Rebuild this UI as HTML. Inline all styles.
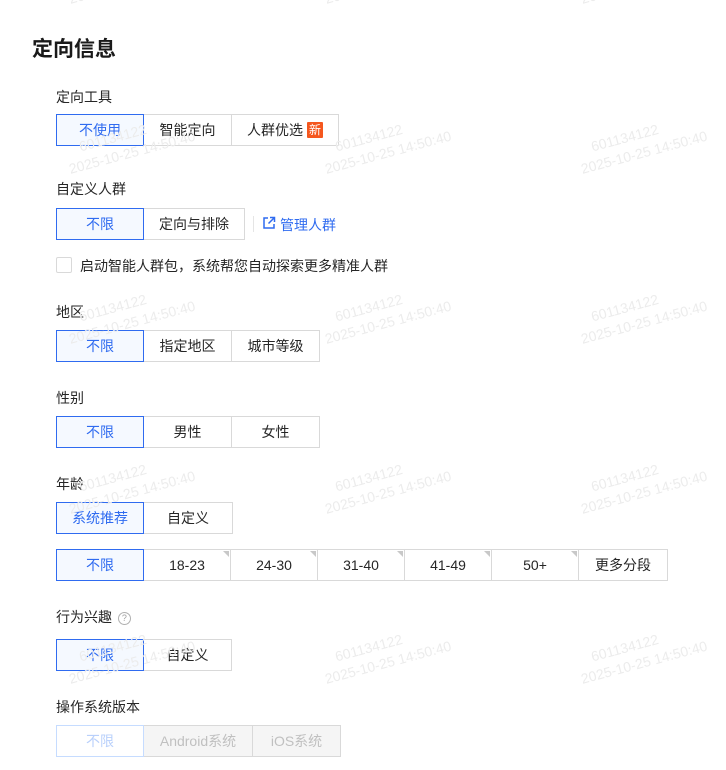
<!DOCTYPE html><html><head><meta charset="utf-8"><style>
*{margin:0;padding:0;box-sizing:border-box}
body{width:726px;height:770px;background:#fff;position:relative;overflow:hidden;font-family:"Liberation Sans","Noto Sans CJK SC",sans-serif;color:#1f1f1f}
.a{position:absolute}
.t{left:32px;top:33px;font-size:21px;font-weight:bold;color:#1a1a1a}
.l{position:absolute;left:56px;font-size:14px;color:#262626}
.g{position:absolute;left:56px;height:32px;display:flex}
.b{height:32px;border:1px solid #d9d9d9;margin-left:-1px;display:flex;align-items:center;justify-content:center;font-size:14px;color:#262626;background:#fff;position:relative}
.b:first-child{margin-left:0}
.s{border-color:#2f6bf0;color:#2f6bf0;background:#f5f9ff;z-index:2}
.c:after{content:"";position:absolute;right:1px;top:1px;border-top:6px solid #c8c8c8;border-left:6px solid transparent}
.d{color:#c0c0c0;background:#f5f5f5}
.ds{border-color:#c6dcff;color:#b9d0fb;background:#fff;z-index:2}
.w{position:absolute;color:#ececec;font-size:14px;transform:rotate(-15deg);transform-origin:left top;line-height:19px;white-space:nowrap;z-index:5;pointer-events:none}
.new{display:inline-block;width:16px;height:16px;background:#f5571e;color:#fff;font-size:12px;line-height:16px;text-align:center;margin-left:4px;border-radius:1px}
</style></head><body>
<div class="a t">定向信息</div>

<div class="l" style="top:87px">定向工具</div>
<div class="g" style="top:114px"><div class="b s" style="width:88px">不使用</div><div class="b" style="width:89px">智能定向</div><div class="b" style="width:108px">人群优选<span class="new">新</span></div></div>

<div class="l" style="top:179px">自定义人群</div>
<div class="g" style="top:208px"><div class="b s" style="width:88px">不限</div><div class="b" style="width:102px">定向与排除</div></div>
<div class="a" style="left:253px;top:216px;width:1px;height:16px;background:#e5e5e5"></div>
<svg class="a" style="left:262px;top:216px" width="14" height="14" viewBox="0 0 14 14" fill="none" stroke="#2f6bf0" stroke-width="1.5"><path d="M6 2H2v10h10V8"/><path d="M8 1.5h4.5V6M12.5 1.5L6.5 7.5"/></svg>
<div class="a" style="left:280px;top:215px;font-size:14px;color:#2f6bf0">管理人群</div>
<div class="a" style="left:56px;top:257px;width:16px;height:16px;border:1px solid #d9d9d9;border-radius:2px"></div>
<div class="a" style="left:80px;top:256px;font-size:14px;color:#262626">启动智能人群包，系统帮您自动探索更多精准人群</div>

<div class="l" style="top:302px">地区</div>
<div class="g" style="top:330px"><div class="b s" style="width:88px">不限</div><div class="b" style="width:89px">指定地区</div><div class="b" style="width:89px">城市等级</div></div>

<div class="l" style="top:388px">性别</div>
<div class="g" style="top:416px"><div class="b s" style="width:88px">不限</div><div class="b" style="width:89px">男性</div><div class="b" style="width:89px">女性</div></div>

<div class="l" style="top:474px">年龄</div>
<div class="g" style="top:502px"><div class="b s" style="width:88px">系统推荐</div><div class="b" style="width:90px">自定义</div></div>
<div class="g" style="top:549px"><div class="b s" style="width:88px">不限</div><div class="b c" style="width:88px">18-23</div><div class="b c" style="width:88px">24-30</div><div class="b c" style="width:88px">31-40</div><div class="b c" style="width:88px">41-49</div><div class="b c" style="width:88px">50+</div><div class="b" style="width:90px">更多分段</div></div>

<div class="l" style="top:607px">行为兴趣 <span style="display:inline-block;width:13px;height:13px;border:1px solid #b0b0b0;border-radius:50%;font-size:9px;line-height:11px;text-align:center;color:#a0a0a0;vertical-align:1px;margin-left:2px">?</span></div>
<div class="g" style="top:639px"><div class="b s" style="width:88px">不限</div><div class="b" style="width:89px">自定义</div></div>

<div class="l" style="top:697px">操作系统版本</div>
<div class="g" style="top:725px"><div class="b ds" style="width:88px">不限</div><div class="b d" style="width:110px">Android系统</div><div class="b d" style="width:89px">iOS系统</div></div>

<div class="w" style="left:62px;top:-28px">&nbsp;&nbsp;&nbsp;&nbsp;601134122<br>2025-10-25 14:50:40</div>
<div class="w" style="left:318px;top:-28px">&nbsp;&nbsp;&nbsp;&nbsp;601134122<br>2025-10-25 14:50:40</div>
<div class="w" style="left:574px;top:-28px">&nbsp;&nbsp;&nbsp;&nbsp;601134122<br>2025-10-25 14:50:40</div>
<div class="w" style="left:62px;top:142px">&nbsp;&nbsp;&nbsp;&nbsp;601134122<br>2025-10-25 14:50:40</div>
<div class="w" style="left:318px;top:142px">&nbsp;&nbsp;&nbsp;&nbsp;601134122<br>2025-10-25 14:50:40</div>
<div class="w" style="left:574px;top:142px">&nbsp;&nbsp;&nbsp;&nbsp;601134122<br>2025-10-25 14:50:40</div>
<div class="w" style="left:62px;top:312px">&nbsp;&nbsp;&nbsp;&nbsp;601134122<br>2025-10-25 14:50:40</div>
<div class="w" style="left:318px;top:312px">&nbsp;&nbsp;&nbsp;&nbsp;601134122<br>2025-10-25 14:50:40</div>
<div class="w" style="left:574px;top:312px">&nbsp;&nbsp;&nbsp;&nbsp;601134122<br>2025-10-25 14:50:40</div>
<div class="w" style="left:62px;top:482px">&nbsp;&nbsp;&nbsp;&nbsp;601134122<br>2025-10-25 14:50:40</div>
<div class="w" style="left:318px;top:482px">&nbsp;&nbsp;&nbsp;&nbsp;601134122<br>2025-10-25 14:50:40</div>
<div class="w" style="left:574px;top:482px">&nbsp;&nbsp;&nbsp;&nbsp;601134122<br>2025-10-25 14:50:40</div>
<div class="w" style="left:62px;top:652px">&nbsp;&nbsp;&nbsp;&nbsp;601134122<br>2025-10-25 14:50:40</div>
<div class="w" style="left:318px;top:652px">&nbsp;&nbsp;&nbsp;&nbsp;601134122<br>2025-10-25 14:50:40</div>
<div class="w" style="left:574px;top:652px">&nbsp;&nbsp;&nbsp;&nbsp;601134122<br>2025-10-25 14:50:40</div>
</body></html>
